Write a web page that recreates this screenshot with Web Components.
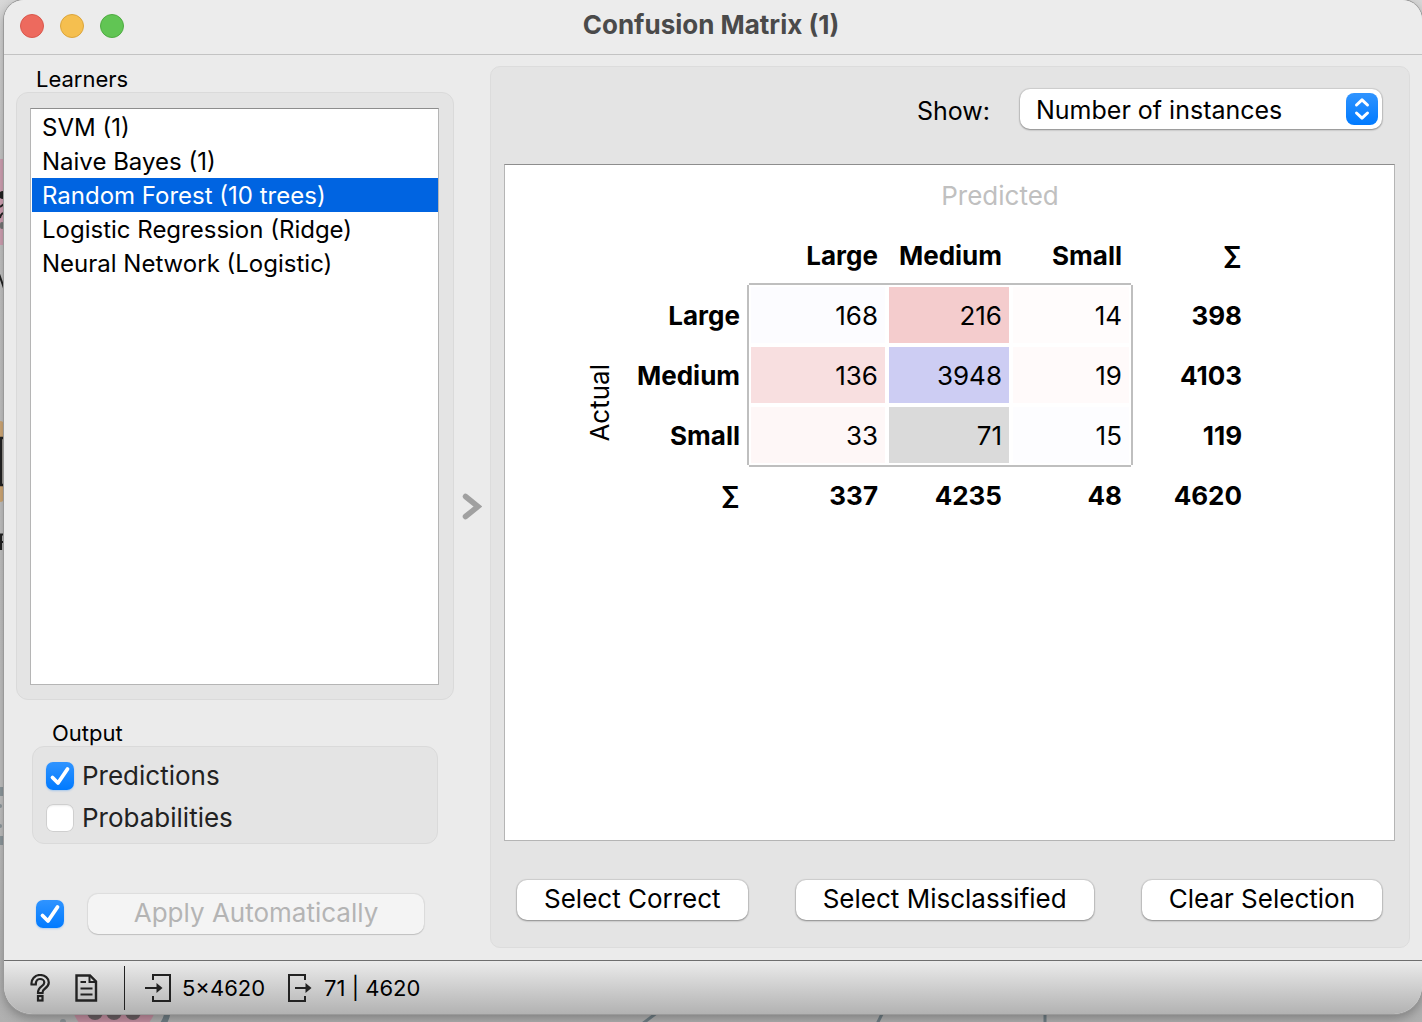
<!DOCTYPE html>
<html lang="en">
<head>
<meta charset="utf-8">
<title>Confusion Matrix (1)</title>
<style>
html, body { margin: 0; height: 100%; }
body { font-family: Inter, "Liberation Sans", sans-serif; font-size: 26px; color: #000; overflow: hidden; background: #b4b4b4; }
</style>
</head>
<body>
<desk-top>
  <app-window caption="Confusion Matrix (1)">
    <side-panel slot="side"></side-panel>
    <matrix-panel slot="main"></matrix-panel>
    <status-bar slot="status"></status-bar>
  </app-window>
</desk-top>
<script>
const CHECK = `
  input[type=checkbox] { appearance: none; margin: 0; width: 28px; height: 28px; border-radius: 7px; flex: none;
    background: #fff; box-shadow: inset 0 0 0 1px #cfcfcf, inset 0 2px 2px #ececec; display: grid; place-items: center; }
  input[type=checkbox]:checked { background: linear-gradient(#3094ff, #007aff); box-shadow: 0 1px 2px #007aff44; }
  .tick { display: grid; flex: none; }
  .tick > * { grid-area: 1 / 1; }
  .tick svg { width: 28px; height: 28px; pointer-events: none; visibility: hidden; }
  .tick input:checked + svg { visibility: visible; }
`;
const TICK = `<svg viewBox="0 0 28 28" fill="none" stroke="#fff" stroke-width="3.8" stroke-linecap="round" stroke-linejoin="round"><path d="M6.5 15.5 L12 21 L21.5 7"/></svg>`;
const PUSH = `
  button { font: inherit; line-height: 38px; height: 40px; box-sizing: border-box; padding: 0 27px 2px; border: 0; border-radius: 10px; color: #000; white-space: nowrap;
    background: #fff; box-shadow: 0 0 1px 1px #00000018, 0 1px 2px #00000055; }
  button:disabled { color: #b4b4b4; background: #f4f4f4; box-shadow: 0 0 1px 1px #00000010, 0 1px 1px #00000022; }
`;
function define(name, html, setup) {
  const t = document.createElement('template');
  t.innerHTML = html;
  customElements.define(name, class extends HTMLElement {
    constructor() {
      super();
      this.attachShadow({ mode: 'open' }).append(t.content.cloneNode(true));
    }
    connectedCallback() { if (setup) setup(this, this.shadowRoot); }
  });
}

define('desk-top', `
<style>
  :host { display: grid; height: 100vh; overflow: hidden; grid-template: 100% / 100%;
    background: linear-gradient(#d8d8d8, #c6c6c6 200px, #c4c4c4 800px, #b0b0b0); }
  svg, slot { grid-area: 1 / 1; }
  svg { width: 1422px; height: 1022px; }
</style>
<svg viewBox="0 0 1422 1022" aria-hidden="true">
  <rect x="-40" y="159" width="44" height="86" fill="#d3a3b5"/>
  <circle cx="3" cy="195" r="4" fill="#222"/><path d="M0 207 L4 204 M0 218 Q1 213 4 213" stroke="#222" stroke-width="2" fill="none"/>
  <rect x="0" y="222" width="4" height="7" rx="2" fill="#777"/>
  <path d="M-2 271 L5 291" stroke="#222" stroke-width="2"/>
  <rect x="-40" y="421" width="44" height="81" rx="4" fill="#d3ab78"/>
  <rect x="1" y="438" width="20" height="47" fill="#c4bfb8" stroke="#222" stroke-width="2.5"/>
  <path d="M1 550 V534.5 H5 M1 542 H5" stroke="#222" stroke-width="2.2" fill="none"/>
  <g fill="#8f9a9f"><rect x="-4" y="787" width="8" height="9"/><rect x="-4" y="836" width="8" height="9"/><circle cx="0" cy="806" r="2"/><circle cx="0" cy="826" r="2"/></g>
  <circle cx="114" cy="996" r="44" fill="#c38fa1"/>
  <g fill="#6a5f63"><circle cx="95" cy="1012" r="8"/><circle cx="114" cy="1012" r="8"/><circle cx="133" cy="1012" r="8"/></g>
  <path d="M168 1010 Q167 1018 163 1024" stroke="#6f7d84" stroke-width="6" fill="none"/>
  <circle cx="63" cy="1022" r="3" fill="#8a9296"/>
  <path d="M658 1012 L642 1024 M883 1012 L877 1024 M1045 1012 V1024" stroke="#6f7d84" stroke-width="3" fill="none"/>
</svg>
<slot></slot>`);

define('app-window', `
<style>
  :host { grid-area: 1 / 1; display: flex; flex-direction: column; margin: 0 0 8px 4px; border-radius: 20px 20px 28px 28px; overflow: hidden;
    background: #ebebeb; box-shadow: 0 0 0 1px #9a9a9a, 0 4px 12px #00000050; position: relative; }
  header { display: grid; grid-template-columns: 1fr auto 1fr; align-items: center; height: 52px; padding: 0 20px 2px 16px; background: #ececec; border-bottom: 1px solid #c3c3c3; }
  .lights { display: flex; gap: 16px; }
  .lights button { width: 24px; height: 24px; padding: 0; border: 1px solid #d9584d; border-radius: 50%; background: #ed6a5e; }
  .lights button:nth-child(2) { background: #f5bf4f; border-color: #dba53c; }
  .lights button:nth-child(3) { background: #61c554; border-color: #4fab42; }
  h1 { margin: 0; font-size: 26px; line-height: 30px; font-weight: 700; color: #4a4a4a; padding-bottom: 2px; }
  main { flex: 1; min-height: 0; display: flex; }
</style>
<header>
  <div class="lights"><button aria-label="Close"></button><button aria-label="Minimize"></button><button aria-label="Zoom"></button></div>
  <h1></h1>
</header>
<main><slot name="side"></slot><slot name="main"></slot></main>
<slot name="status"></slot>`, (el, root) => { root.querySelector('h1').textContent = el.getAttribute('caption'); });

define('group-box', `
<style>
  :host { display: flex; flex-direction: column; }
  .label { font-size: 22px; line-height: 26px; padding: 0 20px; }
  .box { flex: 1; min-height: 0; display: flex; flex-direction: column; box-sizing: border-box; background: #e4e4e4; border: 1px solid #dadada; border-radius: 12px; padding: var(--pad, 13px); gap: 14px; }
</style>
<div class="label"></div>
<div class="box"><slot></slot></div>`, (el, root) => { root.querySelector('.label').textContent = el.getAttribute('label'); });

define('side-panel', `
<style>
  :host { display: flex; flex-direction: column; width: 438px; flex: none; padding: 11px 0 26px 12px; }
  ${CHECK} ${PUSH}
  .learners { flex: 1; min-height: 0; --pad: 15px 14px 14px 13px; }
  select { flex: 1; min-height: 0; width: 100%; box-sizing: border-box; margin: 0; border: 1px solid #b5b5b5; border-top-color: #8d8d8d; border-radius: 0; background: #fff;
    font: inherit; font-size: 24px; padding: 1px 0 0 1px; overflow: hidden; outline: 0; color: #000; }
  option { height: 34px; min-height: 34px; padding: 3px 10px 0; box-sizing: border-box; color: #000; }
  option:checked { color: #fff; background: linear-gradient(#0064e1, #0064e1); }
  .output { margin: 20px 16px 0 16px; --pad: 15px 13px 11px 13px; }
  label { display: flex; align-items: center; gap: 8px; line-height: 28px; color: #222; }
  .apply { display: flex; align-items: center; gap: 24px; margin: 50px 30px 0 20px; }
  .apply button { flex: 1; }
</style>
<group-box class="learners" label="Learners">
  <select size="5" aria-label="Learners">
    <option>SVM (1)</option><option>Naive Bayes (1)</option><option selected>Random Forest (10 trees)</option><option>Logistic Regression (Ridge)</option><option>Neural Network (Logistic)</option>
  </select>
</group-box>
<group-box class="output" label="Output">
  <label><span class="tick"><input type="checkbox" checked>${TICK}</span>Predictions</label>
  <label><span class="tick"><input type="checkbox">${TICK}</span>Probabilities</label>
</group-box>
<div class="apply"><span class="tick"><input type="checkbox" checked aria-label="Apply Automatically">${TICK}</span><button disabled>Apply Automatically</button></div>`);

define('matrix-panel', `
<style>
  :host { flex: 1; min-width: 0; display: flex; padding: 11px 12px 12px 0; }
  ${PUSH}
  .fold { width: 36px; flex: none; padding: 0; border: 0; background: none; box-shadow: none; height: auto; display: grid; place-items: center; }
  .fold svg { width: 20px; height: 28px; }
  .panel { flex: 1; min-width: 0; display: flex; flex-direction: column; background: #e4e4e4; border: 1px solid #dcdcdc; border-radius: 10px; padding: 0 14px 0 13px; }
  .show { display: flex; justify-content: flex-end; align-items: center; gap: 30px; padding: 22px 13px 35px; font-size: 25px; }
  .show label { padding-top: 3px; }
  .combo { display: grid; width: 362px; }
  .combo > * { grid-area: 1 / 1; }
  .combo select { appearance: none; font: inherit; width: 100%; height: 40px; border: 0; border-radius: 10px; padding: 2px 48px 0 16px; color: #000; background: #fff; box-shadow: 0 0 1px 1px #00000018, 0 1px 2px #00000055; }
  .combo svg { width: 32px; height: 32px; justify-self: end; align-self: center; margin-right: 4px; pointer-events: none; }
  .view { flex: 1; min-height: 0; background: #fff; border: 1px solid #b5b5b5; border-top-color: #8d8d8d; overflow: hidden; }
  .actions { display: flex; justify-content: space-between; padding: 39px 13px 27px 13px; }
  table { margin-left: 67px; border-collapse: separate; border-spacing: 0; table-layout: fixed; width: 679px; }
  th, td { box-sizing: border-box; height: 60px; padding: 1px 7px 0; border: 2px solid #fff; text-align: right; line-height: 30px; white-space: nowrap; }
  th { font-weight: 700; }
  .axis { font-weight: 400; text-align: center; }
  .predicted { color: #c0c0c0; }
  .actual span { display: inline-block; writing-mode: vertical-rl; rotate: 180deg; }
  td { position: relative; z-index: 1; box-shadow: var(--x, 0 0 #bfbfbf), var(--y, 0 0 #bfbfbf); }
  .top { --y: 0 -2px #bfbfbf; }
  .bottom { --y: 0 2px #bfbfbf; }
  td:nth-of-type(1) { --x: -2px 0 #bfbfbf; }
  td:nth-of-type(3) { --x: 2px 0 #bfbfbf; }
</style>
<button class="fold" aria-label="Toggle controls"><svg viewBox="0 0 20 28" fill="none" stroke="#a0a0a0" stroke-width="5.5" stroke-linecap="round"><path d="M3.5 3.5 L16 13.5 L3.5 23.5"/></svg></button>
<section class="panel">
  <div class="show"><label for="show">Show:</label>
    <span class="combo"><select id="show"><option>Number of instances</option></select>
      <svg viewBox="0 0 32 32"><defs><linearGradient id="g" x2="0" y2="1"><stop stop-color="#3094ff"/><stop offset="1" stop-color="#007aff"/></linearGradient></defs><rect width="32" height="32" rx="8" fill="url(#g)"/><path d="M10.5 12 L16 6.8 L21.5 12 M10.5 20 L16 25.2 L21.5 20" fill="none" stroke="#fff" stroke-width="3" stroke-linecap="round" stroke-linejoin="round"/></svg></span>
  </div>
  <div class="view">
    <table>
      <colgroup><col style="width:56px"><col style="width:121px"><col style="width:138px"><col style="width:124px"><col style="width:120px"><col style="width:120px"></colgroup>
      <thead>
        <tr><th></th><th></th><th class="axis predicted" colspan="4">Predicted</th></tr>
        <tr><th></th><th></th><th>Large</th><th>Medium</th><th>Small</th><th>∑</th></tr>
      </thead>
      <tbody></tbody>
    </table>
  </div>
  <div class="actions"><button>Select Correct</button><button>Select Misclassified</button><button>Clear Selection</button></div>
</section>`, (el, root) => {
  const rows = [
    ['Large', [[168, '#fcfcff'], [216, '#f4cccd'], [14, '#fffcfc']], 398, 'top'],
    ['Medium', [[136, '#f8dfe0'], [3948, '#cdcdf3'], [19, '#fffafa']], 4103, ''],
    ['Small', [[33, '#fef7f7'], [71, '#dadada'], [15, '#fdfdff']], 119, 'bottom'],
  ];
  root.querySelector('tbody').innerHTML = rows.map(([name, cells, sum, cls], i) =>
    `<tr class="${cls}">${i ? '' : '<th class="axis actual" rowspan="4"><span>Actual</span></th>'}<th>${name}</th>` +
    cells.map(([n, c]) => `<td style="background-color:${c}">${n}</td>`).join('') + `<th>${sum}</th></tr>`).join('') +
    '<tr><th>∑</th><th>337</th><th>4235</th><th>48</th><th>4620</th></tr>';
});

define('status-bar', `
<style>
  :host { display: flex; align-items: center; height: 53px; border-top: 1px solid #6e6e6e; background: linear-gradient(#ebebeb, #b2b2b2); font-size: 22px; line-height: 28px; padding-left: 24px; }
  button { padding: 0; border: 0; background: none; display: flex; margin-right: 22px; }
  svg { width: 24px; height: 28px; fill: none; stroke: #222; }
  hr { width: 1px; height: 44px; margin: 0 20px 0 4px; border: 0; background: #222; }
  span { display: flex; align-items: center; gap: 10px; margin-right: 22px; }
  span svg { width: 27px; stroke-width: 2; }
</style>
<button aria-label="Help"><svg viewBox="0 0 24 28" stroke-width="2.2"><path d="M3.5 10.5 C3 5 7 1 12 1 C17 1 20.8 4 20.8 8.5 C20.8 12 18.5 13.5 16.5 15 C14.8 16.2 14.5 17 14.5 19 H10 C10 15.5 11 14 13.5 12.3 C15.5 11 16.3 10.2 16.3 8.5 C16.3 6.5 14.5 5 12 5 C9.3 5 7.8 6.8 7.8 10.5 Z"/><rect x="10" y="22" width="4.5" height="4.5"/></svg></button>
<button aria-label="Report"><svg viewBox="0 0 24 28" stroke-width="2"><path d="M2.5 1.5 H16 L22 7.5 V26.5 H2.5 Z" stroke-width="2.4"/><path d="M15.5 2 V8 H22 M6.5 8 H12 M6.5 14.5 H18.5 M6.5 20.5 H18.5"/></svg></button>
<hr>
<span><svg viewBox="0 0 27 28"><path d="M8 6 V1 H25 V27 H8 V22"/><path d="M0 14 H14"/><path d="M11.5 9 L17.5 14 L11.5 19 Z" fill="#222" stroke="none"/></svg>5×4620</span>
<span><svg viewBox="0 0 27 28"><path d="M18 6 V1 H2 V27 H18 V22"/><path d="M8 14 H21"/><path d="M18.5 9 L24.5 14 L18.5 19 Z" fill="#222" stroke="none"/></svg>71 | 4620</span>`);
</script>
</body>
</html>
